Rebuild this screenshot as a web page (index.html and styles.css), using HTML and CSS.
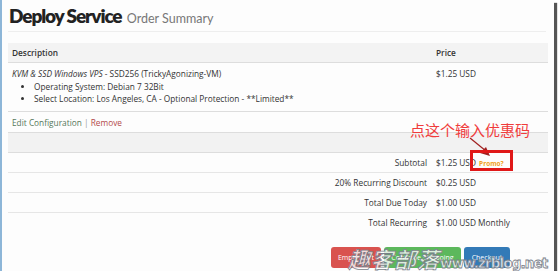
FILE: index.html
```html
<!DOCTYPE html>
<html>
<head>
<meta charset="utf-8">
<link rel="stylesheet" href="styles.css">
</head>
<body>
<div class="frame">
  <div class="page">
    <h1 class="title">Deploy Service <small>Order Summary</small></h1>
    <table class="cart">
      <thead>
        <tr><th class="desc">Description</th><th class="price">Price</th></tr>
      </thead>
      <tbody>
        <tr class="item">
          <td class="desc">
            <div><em>KVM &amp; SSD Windows VPS</em> - SSD256 (TrickyAgonizing-VM)</div>
            <ul>
              <li>Operating System: Debian 7 32Bit</li>
              <li>Select Location: Los Angeles, CA - Optional Protection - **Limited**</li>
            </ul>
          </td>
          <td class="price">$1.25 USD</td>
        </tr>
        <tr class="links">
          <td colspan="2"><a class="edit">Edit Configuration</a> <span class="sep">|</span> <a class="remove">Remove</a></td>
        </tr>
        <tr class="band"><td colspan="2"></td></tr>
        <tr class="sum"><td class="label">Subtotal</td><td class="price">$1.25 USD <span class="promo">Promo?</span></td></tr>
        <tr class="sum"><td class="label">20% Recurring Discount</td><td class="price">$0.25 USD</td></tr>
        <tr class="sum"><td class="label">Total Due Today</td><td class="price">$1.00 USD</td></tr>
        <tr class="sum last"><td class="label">Total Recurring</td><td class="price">$1.00 USD Monthly</td></tr>
      </tbody>
    </table>
    <div class="actions">
      <button class="btn red">Empty Cart</button>
      <button class="btn green">Continue Shopping</button>
      <button class="btn blue">Checkout</button>
    </div>
  </div>
  <div class="note">点这个输入优惠码</div>
  <svg class="arrow" width="30" height="30" viewBox="0 0 30 30"><line x1="2" y1="2" x2="18" y2="15" stroke="#a02020" stroke-width="1.2"/><polygon points="22,20 12,17 18,11" fill="#a02020"/></svg>
  <div class="box"></div>
  <div class="watermark"><span class="wm-cjk">趣客部落</span><span class="wm-lat">www.zrblog.net</span></div>
</div>
</body>
</html>
```
FILE: styles.css
```css
html, body { margin: 0; padding: 0; background: #fff; }
body { font-family: "Open Sans", "Noto Sans", sans-serif; color: #333; }
.frame {
  position: relative;
  width: 552px;
  height: 271px;
  background: #fdfdfd;
  border-left: 2px solid #8db6d8;
  box-shadow: 3px 3px 1px #555;
  overflow: hidden;
}
.page { padding: 0 8px 0 6px; }
.title {
  margin: 0;
  padding: 4px 0 0 1px;
  height: 27px;
  font-family: "Lato", sans-serif;
  font-weight: 800;
  font-size: 19px;
  letter-spacing: -1.1px;
  color: #222;
  border-bottom: 1px solid #eee;
  line-height: 24px;
}
.title small { font-weight: 400; font-size: 12.5px; color: #777; letter-spacing: 0; margin-left: 2px; }
.cart {
  margin-top: 11px;
  width: 540px;
  border-collapse: collapse;
  font-size: 8.3px;
}
.cart th {
  background: #f3f3f3;
  text-align: left;
  font-weight: 600;
  height: 19px;
  padding: 0 4px;
  border-bottom: 1px solid #ddd;
}
.cart td { padding: 0 4px; vertical-align: top; }
.cart .price { width: 108px; padding-left: 5px; }
.item td { padding-top: 5px; height: 43px; border-bottom: 1px solid #ddd; }
.item ul { margin: 1px 0 0; padding-left: 22px; }
.item li { line-height: 12px; }
.item div { line-height: 12px; }
.links td { height: 19px; padding-top: 1px; vertical-align: middle; border-bottom: 1px solid #ddd; }
.edit { color: #55775a; }
.sep { color: #999; }
.remove { color: #b34a4a; }
.band td { height: 19px; background: #f2f2f2; border-bottom: 1px solid #ddd; }
.sum td { height: 19px; vertical-align: middle; border-bottom: 1px solid #e6e6e6; }
.sum.last td { border-bottom: none; }
.sum .label { text-align: right; }
.promo { color: #f0a020; font-weight: 700; font-size: 6.5px; margin-left: 1px; }
.actions {
  display: flex;
  justify-content: flex-end;
  gap: 3px;
  margin-top: 15px;
  padding-right: 36px;
}
.btn {
  border: none;
  border-radius: 3px;
  height: 21px;
  color: #fff;
  font-family: "Open Sans", sans-serif;
  font-size: 7px;
  padding: 0 2px;
  white-space: nowrap;
  overflow: hidden;
}
.red { background: #d9534f; width: 50px; }
.green { background: #5cb85c; width: 77px; }
.blue { background: #337ab7; width: 46px; }
.note {
  position: absolute;
  left: 408px;
  top: 121px;
  font-family: "Noto Sans CJK SC", sans-serif;
  font-size: 15px;
  color: #f03c3c;
  line-height: 18px;
}
.arrow { position: absolute; left: 466px; top: 136px; }
.box {
  position: absolute;
  left: 468px;
  top: 150px;
  width: 37px;
  height: 15px;
  border: 3px solid #e01818;
}
.watermark {
  position: absolute;
  left: 346px;
  top: 245px;
  display: flex;
  align-items: baseline;
  color: rgba(255,255,255,0.8);
  -webkit-text-stroke: 0.8px #7a7f8a;
  font-weight: 700;
  white-space: nowrap;
  line-height: 26px;
}
.wm-cjk {
  font-family: "Noto Sans CJK SC", sans-serif;
  font-size: 22px;
  font-style: italic;
  letter-spacing: 1px;
}
.wm-lat {
  font-family: "DejaVu Sans", sans-serif;
  font-size: 13.5px;
  letter-spacing: -0.9px;
}
```
